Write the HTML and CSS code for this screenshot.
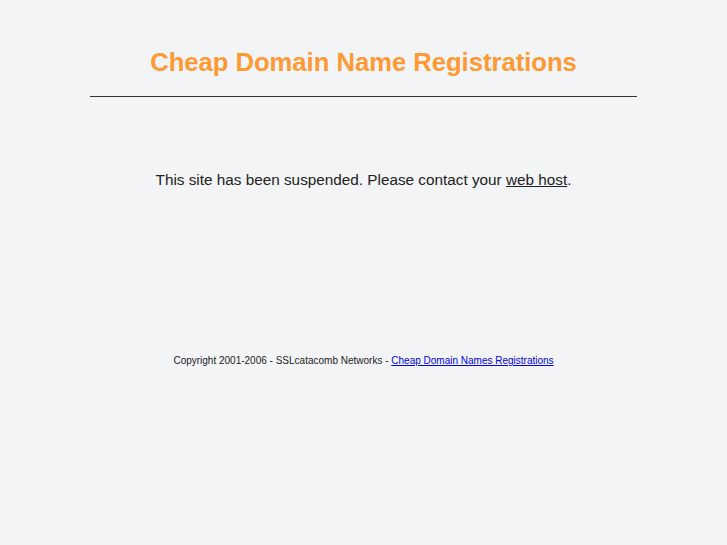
FILE: index.html
```html
<!DOCTYPE html>
<html lang="en">
<head>
  <meta charset="UTF-8">
  <title>Cheap Domain Name Registrations</title>
  <link rel="stylesheet" href="styles.css">
</head>
<body>
  <div class="page">
    <h1 class="headline">Cheap Domain Name Registrations</h1>
    <hr class="rule">
    <p class="message">This site has been suspended. Please contact your <a href="#">web host</a>.</p>
    <p class="footer">Copyright 2001-2006 - SSLcatacomb Networks - <a href="#">Cheap Domain Names Registrations</a></p>
  </div>
</body>
</html>
```
FILE: styles.css
```css
body {
  margin: 0;
  padding: 0;
  background-color: #f3f4f6;
  font-family: 'Liberation Sans', Arial, sans-serif;
  color: #222;
}

.page {
  text-align: center;
  padding-top: 48px;
}

.headline {
  font-size: 25.6px;
  font-weight: bold;
  color: #ff9933;
  margin: 0 0 19px;
}

.rule {
  width: 547px;
  margin: 0 auto;
  border: none;
  border-top: 1px solid #333;
}

.message {
  font-size: 15.3px;
  margin: 74px 0 0;
}

.message a {
  color: #222;
}

.footer {
  font-size: 10px;
  margin: 166px 0 0;
}

.footer a {
  color: #0000ee;
}
```
